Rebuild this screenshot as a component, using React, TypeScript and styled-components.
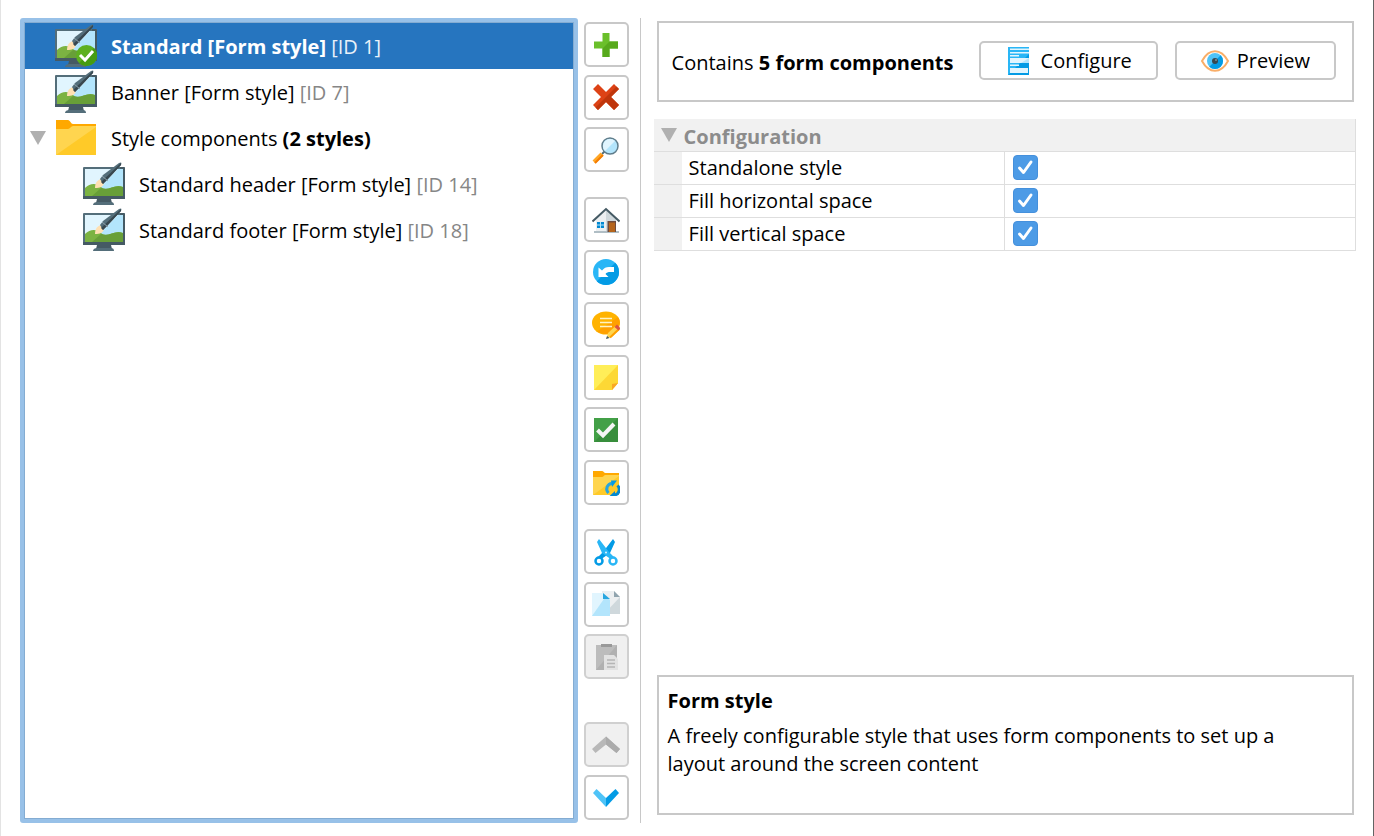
import React, { useState } from "react";
import styled, { createGlobalStyle, css } from "styled-components";

const GlobalStyle = createGlobalStyle`
  *, *::before, *::after { box-sizing: border-box; }
  body { margin: 0; background: #fff; }
  body, button, input { font-family: "Open Sans", "Noto Sans", sans-serif; font-size: 20px; line-height: 28px; color: #000; }
`;

const Page = styled.main`
  display: flex;
  min-height: 100vh;
  padding: 18px 17px 13px 19px;
  border-left: 1px solid #e3e3e3;
  border-right: 1px solid #636363;
`;

/* Tree of styles */

const TreePanel = styled.section`
  flex: 1 1 558px;
  min-width: 0;
  border: 4px solid #98c1e8;
  border-radius: 3px;
  box-shadow: inset 0 0 0 1px #84acd2;
  padding: 1px;
`;

const Tree = styled.ul`
  list-style: none;
  margin: 0;
  padding: 0;
`;

const TreeRow = styled.div<{ $selected?: boolean; $level?: number }>`
  display: flex;
  align-items: center;
  height: 46px;
  padding-left: ${({ $level = 0 }) => 4 + $level * 28}px;
  white-space: nowrap;
  overflow: hidden;
  ${({ $selected }) => $selected && css`
    background: #2675bf;
    color: #fff;
  `}
`;

const Toggle = styled.button`
  display: flex;
  align-items: center;
  width: 26px;
  padding: 0 0 0 1px;
  border: 0;
  background: none;
`;

const ToggleSpace = styled.span`
  width: 26px;
`;

const TreeIcon = styled.span`
  display: flex;
  width: 42px;
  margin-right: 14px;
`;

const TreeLabel = styled.span<{ $bold?: boolean }>`
  padding-top: 1px;
  font-weight: ${({ $bold }) => ($bold ? 700 : 400)};
`;

const ItemId = styled.span<{ $selected?: boolean }>`
  font-weight: 400;
  color: ${({ $selected }) => ($selected ? "#e9f1f9" : "#868686")};
`;

/* Vertical tool bar */

const Toolbar = styled.div`
  display: flex;
  flex: none;
  flex-direction: column;
  padding: 4px 11px 0 6px;
  border-right: 1px solid #c8c8c8;
`;

const ToolGroup = styled.div<{ $height: number; $before?: number }>`
  display: flex;
  flex-direction: column;
  justify-content: space-between;
  height: ${({ $height }) => $height}px;
  margin-top: ${({ $before = 0 }) => $before}px;
`;

const ToolButton = styled.button`
  display: flex;
  align-items: center;
  justify-content: center;
  width: 45px;
  height: 45px;
  padding: 0;
  border: 2px solid #c8c8c8;
  border-radius: 5px;
  background: #fff;
  &:disabled { background: #f0f0f0; border-color: #d0d0d0; }
`;

/* Details of the selected style */

const Details = styled.section`
  display: flex;
  flex: 1 1 716px;
  flex-direction: column;
  min-width: 0;
  padding: 3px 0 8px 13px;
`;

const Summary = styled.div`
  display: flex;
  align-items: center;
  gap: 17px;
  min-height: 81px;
  margin: 0 2px 17px 3px;
  padding: 0 16px 0 13px;
  border: 2px solid #c8c8c8;
`;

const SummaryText = styled.p`
  flex: 1;
  margin: 0;
  padding-top: 2px;
`;

const ActionButton = styled.button`
  display: flex;
  align-items: center;
  height: 39px;
  margin-bottom: 2px;
  padding: 0 24px;
  gap: 8px;
  border: 2px solid #c8c8c8;
  border-radius: 5px;
  background: #fff;
  white-space: nowrap;
`;

const Properties = styled.table`
  width: 100%;
  border-collapse: collapse;
  table-layout: fixed;
  border-right: 1px solid #dedede;
`;

const GroupHead = styled.th`
  height: 32px;
  padding: 4px 0 0 7px;
  background: #f1f1f1;
  border-bottom: 1px solid #dedede;
  color: #8c8c8c;
  font-weight: 700;
  line-height: 27px;
  text-align: left;
`;

const GroupToggle = styled(Toggle)`
  display: inline-block;
  width: 23px;
  padding: 0;
  vertical-align: 2px;
  line-height: 14px;
  text-align: left;
`;

const GutterCol = styled.col`
  width: 28px;
`;

const NameCol = styled.col`
  width: 46%;
`;

const Gutter = styled.td`
  padding: 0;
  background: #f1f1f1;
  border-bottom: 1px solid #dedede;
`;

const NameCell = styled.th`
  height: 33px;
  padding: 0 0 0 7px;
  border-right: 1px solid #dedede;
  border-bottom: 1px solid #dedede;
  font-weight: 400;
  text-align: left;
`;

const ValueCell = styled.td`
  padding: 0 0 0 8px;
  border-bottom: 1px solid #dedede;
`;

const CheckWrap = styled.span`
  display: grid;
  width: 25px;
  height: 25px;
  > * { grid-area: 1 / 1; }
  > svg { pointer-events: none; }
`;

const CheckBox = styled.input`
  appearance: none;
  width: 25px;
  height: 25px;
  margin: 0;
  border: 1px solid #4590dc;
  border-radius: 4px;
  background: #fff;
  &:checked { background: #4d9be6; }
`;

const Description = styled.div`
  min-height: 140px;
  margin: auto 2px 0 3px;
  padding: 10px 60px 10px 9px;
  border: 2px solid #c8c8c8;
`;

const DescriptionTitle = styled.h2`
  margin: 0 0 7px;
  font-size: 20px;
  line-height: 28px;
`;

const DescriptionText = styled.p`
  margin: 0;
`;

/* Drawings */

const Triangle = () => (
  <svg width="16" height="14" viewBox="0 0 16 14"><path d="M0 0H16L8 14Z" fill="#b0b0b0" /></svg>
);

const StyleIcon = ({ checked }: { checked?: boolean }) => (
  <svg width="42" height="44" viewBox="0 0 42 44">
    <path d="M14 37H28L29 41H13Z" fill="#455a64" />
    <path d="M10 43c0-2 2-3 4-3h14c2 0 3 1 3 3z" fill="#546e7a" />
    <path d="M1 5H41a1 1 0 0 1 1 1V36a1 1 0 0 1-1 1H1a1 1 0 0 1-1-1V6a1 1 0 0 1 1-1z" fill="#546e7a" />
    <path d="M42 6V37H0V34H37V5H41z" fill="#455a64" />
    <path d="M2 7H40V34H2Z" fill="#e1f5fe" />
    <path d="M35 7H40V34H9Z" fill="#b3e5fc" />
    <path d="M2 26c4-4 9-5 13-3 3 1 4 4 8 4 5 0 10-5 17-2v9H2z" fill="#7cb342" />
    <path d="M18 26c8 3 13-4 22-1v9H9z" fill="#689f38" />
    <path d="M12 26c0-5 2-8 6-9l3 4c-1 4-4 5-9 5z" fill="#ffe0b2" />
    <path d="M17 17L20 13L36 1C38 0 39 0 38 3L24 18L20 22Z" fill="#546e7a" />
    <path d="M24 18L20 22L18 20L38 1V3Z" fill="#37474f" />
    <path d="M19 14l6 5" stroke="#90a4ae" strokeWidth="1" />
    {checked && (
      <>
        <circle cx="31.500" cy="31.500" r="10.500" fill="#5db020" />
        <path d="M39 24a10.500 10.500 0 0 1-15 15z" fill="#459c12" />
        <path d="M25 31l5 5 8-9" fill="none" stroke="#fff" strokeWidth="3" />
      </>
    )}
  </svg>
);

const FolderIcon = () => (
  <svg width="42" height="36" viewBox="0 0 42 36">
    <path d="M1 0H13c2 0 3 4 5 4H41V12H1Z" fill="#ffa800" />
    <path d="M1 9H13c2 0 3-3 5-3H41V35H1Z" fill="#ffd54f" />
    <path d="M41 7V35H1Z" fill="#ffca28" />
  </svg>
);

const Glyph = ({ children }: { children: React.ReactNode }) => (
  <svg width="28" height="28" viewBox="0 0 28 28" fill="none">{children}</svg>
);

const AddIcon = () => (
  <Glyph>
    <path d="M10.500 2H17.500V10.500H26V17.500H17.500V26H10.500V17.500H2V10.500H10.500Z" fill="#6abf2a" />
    <path d="M17.500 10.500H26V17.500H17.500V26H10.500V17.500Z" fill="#57a91c" />
  </Glyph>
);

const RemoveIcon = () => (
  <Glyph>
    <path d="M6 1L14 9L22 1L27 6L19 14L27 22L22 27L14 19L6 27L1 22L9 14L1 6Z" fill="#dd4215" />
    <path d="M27 6L19 14L27 22L22 27L14 19L6 27L3.500 24.500L24.500 3.500Z" fill="#bf360c" />
  </Glyph>
);

const SearchIcon = () => (
  <Glyph>
    <path d="M10 18L13 15" stroke="#546e7a" strokeWidth="2" />
    <path d="M2 26L10 18" stroke="#ffa726" strokeWidth="4" />
    <path d="M3 27L11 19" stroke="#f57c00" strokeWidth="2" />
    <circle cx="18" cy="10" r="8" fill="#b3e5fc" stroke="#607d8b" strokeWidth="1.500" />
    <path d="M13 15A7 7 0 0 1 23 5Z" fill="#e1f5fe" />
  </Glyph>
);

const HomeIcon = () => (
  <Glyph>
    <path d="M4 13L14 4L24 13V26H4Z" fill="#eceff1" />
    <path d="M14 4L24 13V26H14Z" fill="#cfd8dc" />
    <path d="M2 25H27V27H2Z" fill="#b0bec5" />
    <path d="M0.500 15.500L14 3L27.500 15.500" stroke="#455a64" strokeWidth="2" />
    <path d="M5 16H12V22H5Z" fill="#0288d1" />
    <path d="M8.500 16V22M5 19H12" stroke="#b3e5fc" />
    <path d="M15.500 15H24V26H15.500Z" fill="#6d4c41" />
    <path d="M17 16.500H23V26H17Z" fill="#b5651d" />
  </Glyph>
);

const UndoIcon = () => (
  <Glyph>
    <circle cx="14" cy="14" r="13" fill="#29b6f6" />
    <path d="M23.200 4.800A13 13 0 0 1 4.800 23.200Z" fill="#039be5" />
    <path d="M6.500 9.500L10 12.500C12 10 14 9 17 9H22V14H18.500C16 14 14.500 14.500 13.500 16L16.500 19H6.500Z" fill="#fff" />
  </Glyph>
);

const CommentIcon = () => (
  <Glyph>
    <ellipse cx="14" cy="12" rx="14" ry="11.500" fill="#ffb300" />
    <path d="M26 6A14 11.500 0 0 1 5 20.500Z" fill="#ffa000" />
    <path d="M8 7.500H20M8 11.500H20M8 15.500H20" stroke="#fff3c4" strokeWidth="1.500" />
    <path d="M14.500 27.500L16 22L23.500 15L28 18.500L20 26Z" fill="#ffd54f" />
    <path d="M18 26.500L27 18" stroke="#ffa000" strokeWidth="2" />
    <path d="M22.500 16L25 13.500L28.500 17L26.500 19.500Z" fill="#dd5440" />
    <path d="M14 28L15 25L17.500 27Z" fill="#455a64" />
  </Glyph>
);

const NoteIcon = () => (
  <Glyph>
    <path d="M2 2H26V20L20 27H2Z" fill="#ffee58" />
    <path d="M26 2V20L20 27H2Z" fill="#fdd835" />
    <path d="M20 27V21L26 20Z" fill="#f9a825" />
  </Glyph>
);

const ApproveIcon = () => (
  <Glyph>
    <path d="M2 2H26V26H2Z" fill="#43a047" />
    <path d="M26 2V26H2Z" fill="#388e3c" />
    <path d="M5.500 14L11 19.500L22 8" stroke="#f5f5f5" strokeWidth="4" />
  </Glyph>
);

const FolderSyncIcon = () => (
  <Glyph>
    <path d="M1 3H10c1.500 0 2 2 3.500 2H27V10H1Z" fill="#ffa800" />
    <path d="M1 9H10c1.500 0 2-2 3.500-2H27V27H1Z" fill="#ffd54f" />
    <path d="M27 8V27H1Z" fill="#ffca28" />
    <path d="M16.500 25A5.500 5.500 0 0 1 20 15.500" stroke="#29a6df" strokeWidth="3" />
    <path d="M25.500 17.500A5.500 5.500 0 0 1 22 27" stroke="#0288d1" strokeWidth="3" />
    <path d="M19 12.500H25L20 19Z" fill="#039be5" />
    <path d="M23 23V28.500H17Z" fill="#0288d1" />
  </Glyph>
);

const CutIcon = () => (
  <Glyph>
    <path d="M21 1L23 4L18 15L8 22L6 19L11 14Z" fill="#039be5" />
    <path d="M7 1L5 4L10 15L20 22L22 19L17 14Z" fill="#29b6f6" />
    <circle cx="7" cy="23" r="3.500" fill="#fff" stroke="#039be5" strokeWidth="2.500" />
    <circle cx="21" cy="23" r="3.500" fill="#fff" stroke="#29b6f6" strokeWidth="2.500" />
    <circle cx="14" cy="14.500" r="1" fill="#e1f5fe" />
  </Glyph>
);

const CopyIcon = () => (
  <Glyph>
    <path d="M10 1H22L28 7V24H10Z" fill="#eceff1" />
    <path d="M28 7V24H12Z" fill="#cfd8dc" />
    <path d="M22 1V7H28Z" fill="#90a4ae" />
    <path d="M0 3H11L18 10V26H0Z" fill="#e1f5fe" />
    <path d="M18 10V26H0L14 6Z" fill="#b3e5fc" />
    <path d="M11 3V9H18Z" fill="#29a6df" />
  </Glyph>
);

const PasteIcon = () => (
  <Glyph>
    <path d="M4 2H25V27H4Z" fill="#bcbcbc" />
    <path d="M25 2V27H4Z" fill="#b0b0b0" />
    <path d="M9 1H20V4H9Z" fill="#999" />
    <path d="M12 12H22L26 16V27H12Z" fill="#e2e2e2" />
    <path d="M15 17H23M15 20.500H23M15 24H23" stroke="#b5b5b5" strokeWidth="1.500" />
  </Glyph>
);

const UpIcon = () => (
  <Glyph>
    <path d="M14 5.500L28 18L24.500 22L14 13.500L3.500 22L0 18Z" fill="#b8b8b8" />
    <path d="M14 5.500L28 18L24.500 22L14 13.500Z" fill="#ababab" />
  </Glyph>
);

const DownIcon = () => (
  <Glyph>
    <path d="M1 9L4.500 5L14 14V23Z" fill="#4fc3f7" />
    <path d="M27 9L23.500 5L14 14V23Z" fill="#039be5" />
  </Glyph>
);

const ConfigureIcon = () => (
  <Glyph>
    <path d="M3 0H24V28H3Z" fill="#29b6f6" />
    <path d="M24 7V28H3Z" fill="#039be5" />
    <path d="M5 1.500H24V3H5ZM5 5H24V6.500H5ZM5 8H14V9.500H5ZM5 11H24V16H5ZM5 17.500H14V19H5ZM5 21H23V26H5Z" fill="#e1f5fe" />
    <path d="M24 11V16H16Z" fill="#b3e5fc" />
  </Glyph>
);

const PreviewIcon = () => (
  <svg width="28" height="22" viewBox="0 0 28 22">
    <path d="M1 11C8-2 20-2 27 11C20 24 8 24 1 11Z" fill="#fff" stroke="#f9ae68" strokeWidth="2" />
    <circle cx="14" cy="11" r="8" fill="#4fc3f7" />
    <path d="M19.700 5.300A8 8 0 0 1 8.300 16.700Z" fill="#039be5" />
    <circle cx="14" cy="11" r="3" fill="#37474f" />
    <circle cx="15" cy="10" r="1" fill="#78909c" />
  </svg>
);

type Tool = { label: string; Icon: () => React.ReactElement; disabled?: boolean };

const toolGroups: { height: number; before: number; tools: Tool[] }[] = [
  { height: 150, before: 0, tools: [
    { label: "Add", Icon: AddIcon },
    { label: "Delete", Icon: RemoveIcon },
    { label: "Search", Icon: SearchIcon },
  ] },
  { height: 308, before: 25, tools: [
    { label: "Home", Icon: HomeIcon },
    { label: "Undo", Icon: UndoIcon },
    { label: "Edit comment", Icon: CommentIcon },
    { label: "Note", Icon: NoteIcon },
    { label: "Approve", Icon: ApproveIcon },
    { label: "Move to folder", Icon: FolderSyncIcon },
  ] },
  { height: 150, before: 24, tools: [
    { label: "Cut", Icon: CutIcon },
    { label: "Copy", Icon: CopyIcon },
    { label: "Paste", Icon: PasteIcon, disabled: true },
  ] },
  { height: 98, before: 43, tools: [
    { label: "Move up", Icon: UpIcon, disabled: true },
    { label: "Move down", Icon: DownIcon },
  ] },
];

const properties = ["Standalone style", "Fill horizontal space", "Fill vertical space"];

type StyleItemProps = { name: string; id: number; level?: number; selected?: boolean };

const StyleItem = ({ name, id, level, selected }: StyleItemProps) => (
  <li role="treeitem" aria-selected={!!selected}>
    <TreeRow $selected={selected} $level={level}>
      <ToggleSpace />
      <TreeIcon><StyleIcon checked={selected} /></TreeIcon>
      <TreeLabel $bold={selected}>
        {name} [Form style] <ItemId $selected={selected}>[ID {id}]</ItemId>
      </TreeLabel>
    </TreeRow>
  </li>
);

const PropertyRow = ({ label }: { label: string }) => {
  const [checked, setChecked] = useState(true);
  const id = label.toLowerCase().replace(/ /g, "-");
  return (
    <tr>
      <Gutter />
      <NameCell scope="row"><label htmlFor={id}>{label}</label></NameCell>
      <ValueCell>
        <CheckWrap>
          <CheckBox id={id} type="checkbox" checked={checked} onChange={() => setChecked(!checked)} />
          {checked && (
            <svg width="25" height="25" viewBox="0 0 25 25" fill="none">
              <path d="M6.500 13L10.500 17.500L18 7" stroke="#fff" strokeWidth="3" strokeLinecap="round" strokeLinejoin="round" />
            </svg>
          )}
        </CheckWrap>
      </ValueCell>
    </tr>
  );
};

export default function App() {
  return (
    <>
      <GlobalStyle />
      <Page>
        <TreePanel aria-label="Styles">
          <Tree role="tree">
            <StyleItem name="Standard" id={1} selected />
            <StyleItem name="Banner" id={7} />
            <li role="treeitem" aria-expanded="true">
              <TreeRow>
                <Toggle aria-label="Collapse style components"><Triangle /></Toggle>
                <TreeIcon><FolderIcon /></TreeIcon>
                <TreeLabel>Style components <b>(2 styles)</b></TreeLabel>
              </TreeRow>
              <Tree role="group">
                <StyleItem name="Standard header" id={14} level={1} />
                <StyleItem name="Standard footer" id={18} level={1} />
              </Tree>
            </li>
          </Tree>
        </TreePanel>

        <Toolbar role="toolbar" aria-orientation="vertical">
          {toolGroups.map(({ height, before, tools }) => (
            <ToolGroup key={tools[0].label} $height={height} $before={before}>
              {tools.map(({ label, Icon, disabled }) => (
                <ToolButton key={label} aria-label={label} disabled={disabled}><Icon /></ToolButton>
              ))}
            </ToolGroup>
          ))}
        </Toolbar>

        <Details>
          <Summary>
            <SummaryText>Contains <b>5 form components</b></SummaryText>
            <ActionButton><ConfigureIcon />Configure</ActionButton>
            <ActionButton><PreviewIcon />Preview</ActionButton>
          </Summary>

          <Properties>
            <colgroup><GutterCol /><NameCol /><col /></colgroup>
            <thead>
              <tr>
                <GroupHead colSpan={3}>
                  <GroupToggle aria-label="Collapse configuration"><Triangle /></GroupToggle>
                  Configuration
                </GroupHead>
              </tr>
            </thead>
            <tbody>
              {properties.map((label) => <PropertyRow key={label} label={label} />)}
            </tbody>
          </Properties>

          <Description>
            <DescriptionTitle>Form style</DescriptionTitle>
            <DescriptionText>
              A freely configurable style that uses form components to set up a layout around the screen content
            </DescriptionText>
          </Description>
        </Details>
      </Page>
    </>
  );
}
